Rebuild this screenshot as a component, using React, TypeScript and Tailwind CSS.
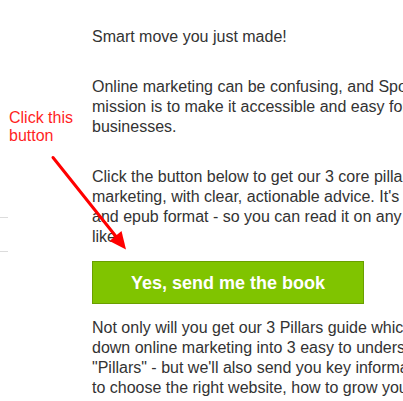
const paragraphs = [
  ['Smart move you just made!'],
  [
    "Online marketing can be confusing, and Spotibo's",
    'mission is to make it accessible and easy for small',
    'businesses.',
  ],
  [
    'Click the button below to get our 3 core pillars of online',
    "marketing, with clear, actionable advice. It's free in PDF",
    'and epub format - so you can read it on any device you',
    'like.',
  ],
];

const afterButton = [
  'Not only will you get our 3 Pillars guide which breaks',
  'down online marketing into 3 easy to understand',
  "\"Pillars\" - but we'll also send you key information on how",
  'to choose the right website, how to grow your business',
];

function Lines({ lines }: { lines: string[] }) {
  return (
    <div>
      {lines.map((line, i) => (
        <div key={i} className="whitespace-nowrap">
          {line}
        </div>
      ))}
    </div>
  );
}

export default function App() {
  return (
    <div className="relative min-h-screen overflow-hidden bg-white font-['Liberation_Sans',Arial,sans-serif]">
      <div className="flex">
        {/* Left margin with annotation */}
        <div className="w-[92px] shrink-0 flex flex-col">
          <div className="pt-[109px] pl-[9px] text-[16px] leading-[18.4px] text-[#ff1f1f]">
            Click this
            <br />
            button
          </div>
          <div className="mt-[71px] h-px w-[8px] bg-[#dcdcdc]" />
          <div className="mt-[33px] h-px w-[8px] bg-[#dcdcdc]" />
        </div>

        {/* Email body */}
        <div className="flex flex-col pt-[27px] text-[16px] leading-[20px] text-[#333333]">
          <div className="flex flex-col gap-[30px]">
            {paragraphs.map((p, i) => (
              <Lines key={i} lines={p} />
            ))}
          </div>

          <button className="mt-[14px] flex h-[43px] w-[272px] items-center justify-center border border-[#6a9f00] bg-[#80c400] text-[18px] font-bold text-white">
            Yes, send me the book
          </button>

          <div className="mt-[14px]">
            <Lines lines={afterButton} />
          </div>
        </div>
      </div>

      {/* Red arrow annotation */}
      <svg
        className="pointer-events-none absolute left-0 top-0"
        width="403"
        height="401"
        viewBox="0 0 403 401"
      >
        <line x1="53" y1="157.5" x2="116" y2="236.5" stroke="#ff0000" strokeWidth="3" strokeLinecap="round" />
        <polygon points="126,249.5 121.5,231 109.5,241" fill="#ff0000" />
      </svg>
    </div>
  );
}
